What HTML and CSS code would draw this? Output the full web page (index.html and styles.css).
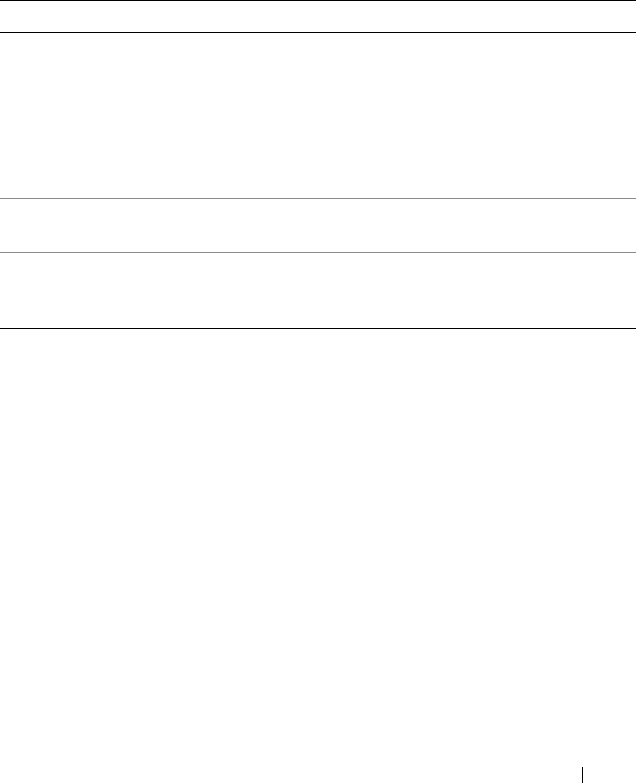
FILE: index.html
```html
<!DOCTYPE html>
<html lang="en">
<head>
    <meta charset="UTF-8">
    <meta name="viewport" content="width=device-width, initial-scale=1.0">
    <title>Table</title>
    <link rel="stylesheet" href="styles.css">
</head>
<body>
    <div class="page">
        <div class="table">
            <div class="row head"></div>
            <div class="row first"></div>
            <div class="row second"></div>
            <div class="row last"></div>
        </div>
        <div class="footer">
            <span class="rule"></span>
        </div>
    </div>
</body>
</html>
```

FILE: styles.css
```css
body {
    margin: 0;
    background: #fff;
    font-family: "Liberation Sans", Arial, sans-serif;
    overflow: hidden;
}

.page {
    width: 641px;
    height: 783px;
    display: flex;
    flex-direction: column;
}

.table {
    width: 636px;
    border-top: 1px solid #000;
}

.row {
    border-bottom: 1px solid #8a8a8a;
}

.row.head {
    height: 31px;
    border-bottom-color: #000;
}

.row.first {
    height: 165px;
}

.row.second {
    height: 53px;
}

.row.last {
    height: 75px;
    border-bottom-color: #000;
}

.footer {
    margin-top: auto;
    display: flex;
    padding-left: 582px;
}

.footer .rule {
    width: 0;
    height: 16px;
    border-left: 1px solid #000;
}
```
